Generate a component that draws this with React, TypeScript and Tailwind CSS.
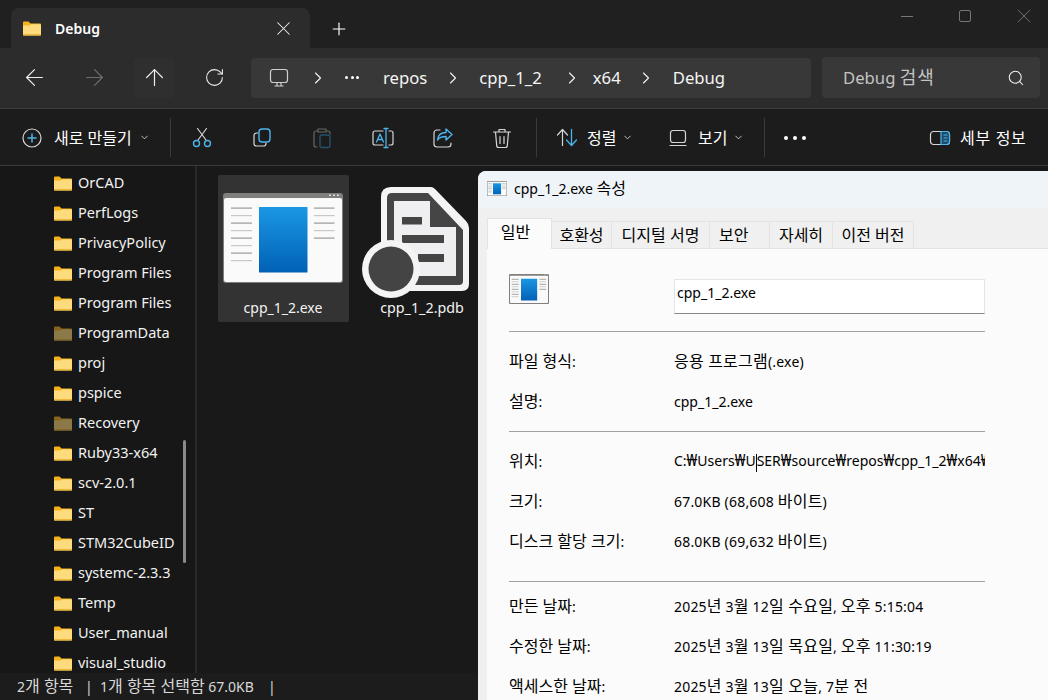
import { ArrowLeft, ArrowRight, ArrowUp, ChevronDown, ChevronRight, Plus, RotateCw, Search, X } from "lucide-react";

const font = "[font-family:'Noto_Sans','Noto_Sans_CJK_KR',sans-serif]";

const folders = [
  { name: "OrCAD" },
  { name: "PerfLogs" },
  { name: "PrivacyPolicy" },
  { name: "Program Files" },
  { name: "Program Files" },
  { name: "ProgramData", dim: true },
  { name: "proj" },
  { name: "pspice" },
  { name: "Recovery", dim: true },
  { name: "Ruby33-x64" },
  { name: "scv-2.0.1" },
  { name: "ST" },
  { name: "STM32CubeID" },
  { name: "systemc-2.3.3" },
  { name: "Temp" },
  { name: "User_manual" },
  { name: "visual_studio" },
];

// hangul runs sit larger than the latin next to them in the original font
function Ko({ t }: { t: string }) {
  const parts = t.split(/([가-힣₩]+(?: [가-힣]+)*)/);
  return (
    <>
      {parts.map((p, i) => (i % 2 ? <span key={i} className="text-[16px] leading-[20px]">{p}</span> : p))}
    </>
  );
}

function FolderIcon({ dim }: { dim?: boolean }) {
  return (
    <svg width="18" height="15" viewBox="0 0 18 15" className={dim ? "opacity-50 shrink-0" : "shrink-0"}>
      <path d="M0 1.5A1 1 0 0 1 1 .5h4.5l2 2H17a1 1 0 0 1 1 1V6H0z" fill="#f6b21b" />
      <path d="M0 4.5h6.5l1.5-1.2H17a1 1 0 0 1 1 1v9.2a1 1 0 0 1-1 1H1a1 1 0 0 1-1-1z" fill="#fedb7c" />
      <rect x="0" y="13" width="18" height="1.5" fill="#efb73a" />
    </svg>
  );
}

function ExeIcon({ width, height }: { width: number; height: number }) {
  const ys = [14.5, 22, 29.5, 37, 44.5, 52, 59.5, 67];
  const small = width < 60;
  const inset = small ? 3 : 1;
  const lh = small ? 2.6 : 1.2;
  return (
    <svg width={width} height={height} viewBox="0 0 120 90" preserveAspectRatio="none">
      <defs>
        <linearGradient id="exeblue" x1="0" y1="0" x2="0" y2="1">
          <stop offset="0" stopColor="#1a97e3" />
          <stop offset="1" stopColor="#0161b5" />
        </linearGradient>
      </defs>
      <rect x="0" y="0" width="120" height="90" rx="3" fill="#7f7f7d" />
      <rect x={inset} y="5" width={120 - inset * 2} height={85 - inset} rx="2" fill="#fafafa" />
      <rect x="106" y="1.5" width="2" height="1.5" fill="#ddd" />
      <rect x="110" y="1.5" width="2" height="1.5" fill="#ddd" />
      <rect x="114" y="1.5" width="2" height="1.5" fill="#ddd" />
      <rect x="36" y="14" width="48.5" height="65.5" rx="0.5" fill="url(#exeblue)" />
      {ys.map((y, i) => (
        <rect key={y} x="8" y={y} width="21" height={lh} fill={i % 2 ? "#c8c8c8" : "#999"} />
      ))}
      {ys.slice(0, 5).map((y, i) => (
        <rect key={y} x="91" y={y} width="20.5" height={lh} fill={i % 2 ? "#c8c8c8" : "#999"} />
      ))}
    </svg>
  );
}

function PdbIcon() {
  return (
    <svg width="110" height="112" viewBox="360 186 110 112">
      <path d="M391 187H431Q433 187 435 189L466 221Q469 224 469 228V284Q469 291 462 291H388Q381 291 381 284V197Q381 187 391 187Z" fill="#f4f4f4" />
      <path d="M392 193H428L463 230V281Q463 285 459 285H392Q387 285 387 281V198Q387 193 392 193Z" fill="#454545" />
      <path d="M394 201H430V227H456V276H394Z" fill="#efeff1" />
      <rect x="402" y="217" width="20" height="7.5" fill="#454545" />
      <rect x="402" y="235" width="42" height="8" fill="#454545" />
      <rect x="418" y="254" width="26" height="8" fill="#454545" />
      <circle cx="391" cy="269" r="29" fill="#f4f4f4" />
      <circle cx="391" cy="269" r="22.5" fill="#444" />
    </svg>
  );
}

function ToolIcon({ children, w = 24 }: { children: React.ReactNode; w?: number }) {
  return (
    <svg width={w} height="24" viewBox="0 0 24 24" fill="none" strokeLinecap="round" strokeLinejoin="round" strokeWidth="1.2" className="shrink-0">
      {children}
    </svg>
  );
}

const blue = "#4cb4ec";
const grey = "#d6d6d6";

function Toolbar() {
  return (
    <div className="flex h-[57px] items-center border-b border-[#3a3a3a] bg-[#1c1c1c] pt-[1px] text-[16px] text-white">
      <div className="ml-5 flex w-[24px] justify-center">
        <ToolIcon>
          <circle cx="12" cy="12" r="9" stroke={grey} />
          <path d="M12 8v8M8 12h8" stroke={blue} strokeWidth="1.5" />
        </ToolIcon>
      </div>
      <span className="ml-[10px] w-[80px] whitespace-nowrap">새로 만들기</span>
      <ChevronDown size={11} className="ml-[5px] text-[#cfcfcf]" />
      <div className="ml-[20px] h-[39px] w-px bg-[#3a3a3a]" />

      <div className="ml-[19px]">
        <ToolIcon>
          <path d="M8 14 L16.5 2.5M16 14 L7.5 2.5" stroke={grey} />
          <circle cx="6.5" cy="17.5" r="3" stroke={blue} strokeWidth="1.4" />
          <circle cx="17.5" cy="17.5" r="3" stroke={blue} strokeWidth="1.4" />
        </ToolIcon>
      </div>
      <div className="ml-[37px]">
        <ToolIcon>
          <path d="M7 7H5.5A2.5 2.5 0 0 0 3 9.5v8A2.5 2.5 0 0 0 5.5 20h7a2.5 2.5 0 0 0 2.5-2.5V17" stroke={grey} />
          <rect x="8" y="3" width="11" height="13" rx="3" stroke={blue} strokeWidth="1.4" />
        </ToolIcon>
      </div>
      <div className="ml-[35px]">
        <ToolIcon>
          <path d="M7 5H6a2 2 0 0 0-2 2v12a2 2 0 0 0 2 2h1M17 5h1a2 2 0 0 1 2 2v1M8 3h8v3H8z" stroke="#666" />
          <rect x="10" y="9" width="10" height="12.5" rx="2" stroke="#24506b" strokeWidth="1.4" />
        </ToolIcon>
      </div>
      <div className="ml-[37px]">
        <ToolIcon>
          <path d="M12 5H4a2 2 0 0 0-2 2v10a2 2 0 0 0 2 2h8M18 5h2a2 2 0 0 1 2 2v10a2 2 0 0 1-2 2h-2" stroke={grey} />
          <path d="M15 2.5v19M13 2.5h4M13 21.5h4M5.5 16 9 8l3.5 8M6.8 13.5h4.5" stroke={blue} strokeWidth="1.3" />
        </ToolIcon>
      </div>
      <div className="ml-[36px]">
        <ToolIcon>
          <path d="M9 4H6a3 3 0 0 0-3 3v11a3 3 0 0 0 3 3h11a3 3 0 0 0 3-3v-1" stroke={grey} />
          <path d="M15 3v3.5c-5 0-8 2.5-8.5 7.5 2-3 4.5-3.5 8.5-3.5V14l6-5.5z" stroke={blue} strokeWidth="1.4" />
        </ToolIcon>
      </div>
      <div className="ml-[35px]">
        <ToolIcon>
          <path d="M3.5 6h17M9 6V3.5h6V6M5.5 6l1.2 13.5A2 2 0 0 0 8.7 21.5h6.6a2 2 0 0 0 2-2L18.5 6M10 10.5v7M14 10.5v7" stroke={grey} />
        </ToolIcon>
      </div>
      <div className="ml-[22px] h-[39px] w-px bg-[#3a3a3a]" />

      <div className="ml-[18px]">
        <ToolIcon>
          <path d="M2.5 9l5-5.5 5 5.5M7.5 3.5v16" stroke={grey} />
          <path d="M11.5 14l5 5.5 5-5.5M16.5 3.5v16" stroke={blue} strokeWidth="1.3" />
        </ToolIcon>
      </div>
      <span className="ml-[8px] w-[30px] whitespace-nowrap">정렬</span>
      <ChevronDown size={11} className="ml-[5px] text-[#cfcfcf]" />
      <div className="ml-[33px]">
        <ToolIcon>
          <rect x="4.5" y="4.5" width="15" height="12" rx="2.5" stroke={grey} />
          <path d="M4 19.5h16" stroke={grey} />
        </ToolIcon>
      </div>
      <span className="ml-[8px] w-[30px] whitespace-nowrap">보기</span>
      <ChevronDown size={11} className="ml-[5px] text-[#cfcfcf]" />
      <div className="ml-[20px] h-[39px] w-px bg-[#3a3a3a]" />
      <div className="ml-[19px] flex w-[22px] justify-between">
        <div className="size-[4px] rounded-full bg-white" />
        <div className="size-[4px] rounded-full bg-white" />
        <div className="size-[4px] rounded-full bg-white" />
      </div>
      <div className="ml-[122px]">
        <ToolIcon>
          <rect x="2.5" y="5.5" width="19" height="13" rx="3" stroke={grey} />
          <path d="M13 5.5h5.5a3 3 0 0 1 3 3v7a3 3 0 0 1-3 3H13z" stroke={blue} fill="#1d4a66" />
          <path d="M16 9h3M16 12h3M16 15h3" stroke={blue} />
        </ToolIcon>
      </div>
      <span className="ml-[8px] whitespace-nowrap tracking-[0.7px]">세부 정보</span>
    </div>
  );
}

function Crumb() {
  return (
    <div className="flex w-[15px] shrink-0 justify-center">
      <ChevronRight size={20} strokeWidth={1.4} className="shrink-0 text-[#efefef]" />
    </div>
  );
}

function Row({ label, value }: { label: string; value: React.ReactNode }) {
  return (
    <div className="flex h-[40px] items-center">
      <span className="w-[165px] shrink-0 whitespace-nowrap">
        <Ko t={label} />
      </span>
      <span className="w-[311px] overflow-hidden whitespace-nowrap">{value}</span>
    </div>
  );
}

function Spaced({ t }: { t: string }) {
  return (
    <span className="tracking-[0.2px]">
      <Ko t={t} />
    </span>
  );
}

function PropertiesWindow() {
  return (
    <div className="absolute left-[478px] top-[171px] h-[529px] w-[570px] overflow-hidden rounded-tl-[8px] bg-[#f0f0f0] text-[14px] text-black">
      <div className="flex h-[37px] items-center bg-[#eff4f9] pb-[3px] pl-[9px]">
        <ExeIcon width={20} height={15} />
        <span className="ml-[7px] whitespace-nowrap">
          <Ko t="cpp_1_2.exe 속성" />
        </span>
      </div>
      <div className="ml-[9px] mt-[10px] flex h-[30px] items-stretch text-[16px]">
        <div className="relative z-10 flex h-[31px] w-[65px] items-start justify-center border border-b-0 border-[#e3e3e3] bg-[#fbfbfb] pr-[8px] pt-[1px]">일반</div>
        <div className="mt-[3px] flex w-[60px] items-center justify-center border-r border-t border-[#e3e3e3]">호환성</div>
        <div className="mt-[3px] flex w-[98px] items-center justify-center border-r border-t border-[#e3e3e3] whitespace-nowrap">디지털 서명</div>
        <div className="mt-[3px] flex w-[60px] items-center border-r border-t border-[#e3e3e3] pl-[9px]">보안</div>
        <div className="mt-[3px] flex w-[63px] items-center justify-center border-r border-t border-[#e3e3e3]">자세히</div>
        <div className="mt-[3px] flex w-[81px] items-center justify-center border-r border-t border-[#e3e3e3] whitespace-nowrap">이전 버전</div>
      </div>
      <div className="ml-[9px] h-[460px] border-t border-[#e3e3e3] bg-[#fbfbfb] pl-[22px] pt-[30px]">
        <div className="flex h-[35px] w-[476px]">
          <div className="-mt-[5px] w-[165px] shrink-0">
            <ExeIcon width={40} height={30} />
          </div>
          <div className="flex h-[35px] w-[311px] items-start border border-[#e5e5e5] border-b-[#868686] bg-white pl-[2px] pt-[2px]">cpp_1_2.exe</div>
        </div>
        <div className="mt-[17px] h-px w-[476px] bg-[#a0a0a0]" />
        <div className="mt-[9px]">
          <Row label="파일 형식:" value={<Spaced t="응용 프로그램(.exe)" />} />
          <Row label="설명:" value="cpp_1_2.exe" />
        </div>
        <div className="mt-[10px] h-px w-[476px] bg-[#a0a0a0]" />
        <div className="mt-[9px]">
          <Row
            label="위치:"
            value={
              <>
                <Ko t="C:₩Users₩U" />
                <span className="inline-block h-[18px] w-px bg-black align-middle" />
                <Ko t="SER₩source₩repos₩cpp_1_2₩x64₩" />
              </>
            }
          />
          <Row label="크기:" value={<Spaced t="67.0KB (68,608 바이트)" />} />
          <Row label="디스크 할당 크기:" value={<Spaced t="68.0KB (69,632 바이트)" />} />
        </div>
        <div className="mt-[20px] h-px w-[476px] bg-[#a0a0a0]" />
        <div className="mt-[4px]">
          <Row label="만든 날짜:" value={<Spaced t="2025년 3월 12일 수요일, 오후 5:15:04" />} />
          <Row label="수정한 날짜:" value={<Spaced t="2025년 3월 13일 목요일, 오후 11:30:19" />} />
          <Row label="액세스한 날짜:" value={<Spaced t="2025년 3월 13일 오늘, 7분 전" />} />
        </div>
      </div>
    </div>
  );
}

export default function App() {
  return (
    <div className={`${font} relative flex h-[700px] w-[1048px] flex-col overflow-hidden bg-[#191919]`}>
      {/* title bar */}
      <div className="flex h-[48px] shrink-0 items-end bg-[#202020] pl-[11px]">
        <div className="flex h-[40px] w-[299px] items-center rounded-t-[8px] bg-[#2c2c2c] pl-[12px] text-white">
          <FolderIcon />
          <span className="ml-[14px] text-[14px] font-semibold">Debug</span>
          <X size={23} strokeWidth={1.1} className="ml-auto mr-[15px] text-[#f0f0f0]" />
        </div>
        <Plus size={20} strokeWidth={1.4} className="mb-[9px] ml-[19px] text-white" />
        <div className="mb-[20px] ml-auto flex items-center">
          <div className="h-px w-[12px] bg-[#777]" />
          <div className="ml-[46px] size-[12px] rounded-[2px] border border-[#777]" />
          <X size={24} strokeWidth={0.9} className="ml-[41px] mr-[12px] text-[#777]" />
        </div>
      </div>

      {/* nav bar */}
      <div className="flex h-[61px] shrink-0 items-center border-b border-[#3c3c3c] bg-[#2c2c2c] pb-px pl-[14px] text-[16.7px]">
        <div className="flex gap-5">
          <div className="flex size-10 items-center justify-center">
            <ArrowLeft size={27} strokeWidth={1.05} className="shrink-0 text-[#efefef]" />
          </div>
          <div className="flex size-10 items-center justify-center">
            <ArrowRight size={27} strokeWidth={1.05} className="shrink-0 text-[#6e6e6e]" />
          </div>
          <div className="flex size-10 items-center justify-center rounded-[4px] bg-[#2f2f2f]">
            <ArrowUp size={27} strokeWidth={1.05} className="shrink-0 text-[#efefef]" />
          </div>
          <div className="flex size-10 items-center justify-center">
            <RotateCw size={21} strokeWidth={1.2} className="shrink-0 text-[#efefef]" />
          </div>
        </div>
        <div className="ml-[17px] flex h-10 w-[560px] items-center rounded-[4px] bg-[#383838] text-[#f5f5f5]">
          <svg width="20" height="20" viewBox="0 0 20 20" fill="none" stroke="#cfcfcf" strokeWidth="1.2" className="ml-[18px] shrink-0">
            <rect x="1.5" y="1.5" width="17" height="13" rx="2.5" />
            <path d="M8 15v3M12 15v3M5.5 18h9" />
          </svg>
          <div className="ml-[21px]"><Crumb /></div>
          <div className="ml-[20px] flex w-[14px] justify-between">
            <div className="size-[3px] rounded-full bg-white" />
            <div className="size-[3px] rounded-full bg-white" />
            <div className="size-[3px] rounded-full bg-white" />
          </div>
          <span className="ml-[24px]">repos</span>
          <div className="ml-[18px]"><Crumb /></div>
          <span className="ml-[19px]">cpp_1_2</span>
          <div className="ml-[23px]"><Crumb /></div>
          <span className="ml-[13px]">x64</span>
          <div className="ml-[18px]"><Crumb /></div>
          <span className="ml-[19px]">Debug</span>
        </div>
        <div className="ml-[11px] flex h-[41px] w-[218px] items-center rounded-[4px] bg-[#383838] pl-[21px] text-[#c4c4c4]">
          <span className="whitespace-nowrap">Debug <span className="text-[18px] tracking-[1px]">검색</span></span>
          <Search size={18} strokeWidth={1.4} className="ml-auto mr-[15px] text-[#f0f0f0]" />
        </div>
      </div>

      <Toolbar />

      {/* body */}
      <div className="flex min-h-0 flex-1">
        <div className="relative flex h-full w-[197px] shrink-0 flex-col border-r-2 border-[#2a2a2a] bg-[#171717] pl-[54px] pt-[2px]">
          {folders.map((f, i) => (
            <div key={i} className="flex h-[30px] shrink-0 items-center gap-[6px] text-[14.5px] text-[#f2f2f2]">
              <FolderIcon dim={f.dim} />
              <span className="whitespace-nowrap">{f.name}</span>
            </div>
          ))}
          <div className="absolute left-[183px] top-[274px] h-[123px] w-[3px] rounded-full bg-[#8a8a8a]" />
        </div>
        <div className="relative flex-1 pl-[21px] pt-[9px]">
          <div className="flex items-start">
            <div className="flex h-[147px] w-[131px] flex-col items-center rounded-[2px] bg-[#333333] pr-[1px] pt-[18px] text-[14px] text-[#f2f2f2]">
              <ExeIcon width={120} height={90} />
              <span className="mt-[14px]">cpp_1_2.exe</span>
            </div>
            <div className="ml-[11px] flex w-[110px] flex-col items-center pt-[11px] text-[14.3px] text-[#f2f2f2]">
              <PdbIcon />
              <span className="-mt-[1px] ml-[14px] whitespace-nowrap">cpp_1_2.pdb</span>
            </div>
          </div>
        </div>
      </div>

      {/* status bar */}
      <div className="absolute bottom-0 left-0 flex h-[27px] w-[478px] items-center bg-[#1c1c1c] pl-[17px] text-[14px] text-[#d8d8d8]">
        <span className="w-[68px] whitespace-nowrap"><Ko t="2개 항목" /></span>
        <span className="w-[15px]">|</span>
        <span className="w-[168px] whitespace-nowrap"><Ko t="1개 항목 선택함 67.0KB" /></span>
        <span>|</span>
      </div>

      <PropertiesWindow />
    </div>
  );
}
